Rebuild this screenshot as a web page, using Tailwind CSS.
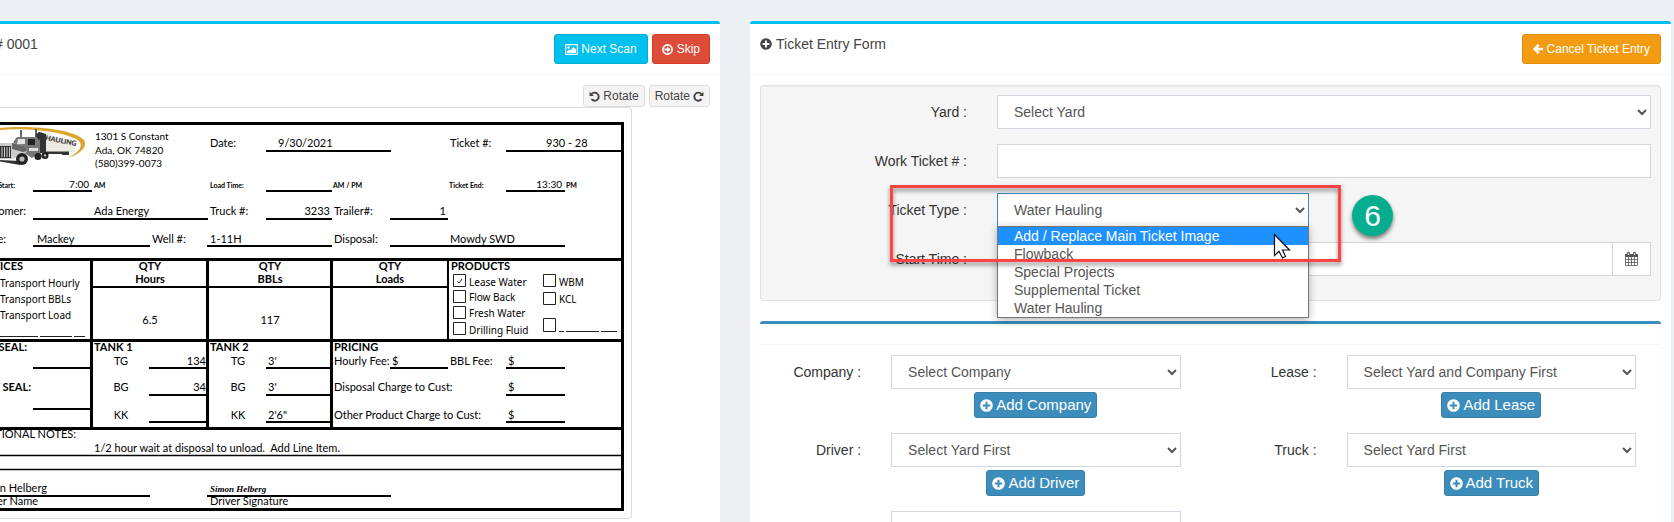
<!DOCTYPE html>
<html lang="en">
  <head>
    <meta charset="UTF-8" />
    <meta name="viewport" content="width=device-width, initial-scale=1.0" />
    <script src="https://cdn.jsdelivr.net/npm/@tailwindcss/browser@4"></script>
    <title>Ticket Entry</title>
  </head>
  <body class="bg-[#ecf0f5] font-['Liberation_Sans',Arial,sans-serif] text-sm text-[#333] overflow-hidden">
    <!-- shared icons -->
    <svg class="hidden" aria-hidden="true">
      <symbol id="plus-circle" viewBox="0 0 14 14">
        <path fill="currentColor" fill-rule="evenodd" d="M7 .2a6.800 6.800 0 1 0 0 13.600A6.800 6.800 0 0 0 7 .2ZM5.900 3h2.200v2.900H11v2.200H8.100V11H5.900V8.100H3V5.900h2.900Z"/>
      </symbol>
      <symbol id="rotate" viewBox="0 0 12 12">
        <path d="M2.600 3.600A4.400 4.400 0 1 1 2.700 8.900" fill="none" stroke="currentColor" stroke-width="2.100"/>
        <path d="M.6.8v4.700h4.700Z" fill="currentColor"/>
      </symbol>
    </svg>

    <main class="grid grid-cols-[43fr_55fr] gap-[30px] pt-[21px] pr-[3px]">
      <!-- Scanned ticket -->
      <section class="min-w-0 bg-white border-t-[3px] border-[#00c0ef] rounded-tr-[3px] shadow-[0_1px_1px_rgba(0,0,0,0.1)]">
        <div class="flex justify-between items-start py-[10px] pr-[10px] border-b border-[#f4f4f4]">
          <h3 class="-ml-[5px] leading-5 text-[#444]"># 0001</h3>
          <div class="flex gap-1 text-xs text-white">
            <button class="flex items-center gap-[3px] h-[30px] px-[10px] rounded-[3px] border border-[#00acd6] bg-[#00c0ef]">
              <svg class="w-[13px] h-[11px]" viewBox="0 0 13 11" fill="currentColor">
                <path fill-rule="evenodd" d="M0 0h13v11H0ZM1.200 1.200v8.600h10.600V1.200Z"/>
                <circle cx="3.600" cy="3.500" r="1.300"/>
                <path d="M2 9V7.500L4 5.500l1 1L8.500 3 11 5.500V9Z"/>
              </svg>
              Next Scan
            </button>
            <button class="flex items-center gap-1 h-[30px] px-[9px] rounded-[3px] border border-[#d73925] bg-[#dd4b39]">
              <svg class="w-[11px] h-[11px]" viewBox="0 0 11 11" fill="currentColor">
                <circle cx="5.500" cy="5.500" r="4.600" fill="none" stroke="currentColor" stroke-width="1.700"/>
                <path d="M5.100 2.300 8.600 5.500 5.100 8.700V6.600H2.400V4.400h2.700Z"/>
              </svg>
              Skip
            </button>
          </div>
        </div>

        <div class="pt-[10px] pr-[10px] pb-8">
          <div class="flex justify-end gap-1 text-xs text-[#444]">
            <button class="flex items-center gap-[3px] h-[22px] px-[5px] rounded-[3px] border border-[#ddd] bg-[#f4f4f4]">
              <svg class="w-[11px] h-[11px]"><use href="#rotate"/></svg>
              Rotate
            </button>
            <button class="flex items-center gap-[3px] h-[22px] px-[5px] rounded-[3px] border border-[#ddd] bg-[#f4f4f4]">
              Rotate
              <svg class="w-[11px] h-[11px] -scale-x-100"><use href="#rotate"/></svg>
            </button>
          </div>

          <div class="w-[632px] max-w-full border-y border-r border-[#ddd] rounded-r-[4px]">
            <svg class="block w-full h-auto font-[Lato,'Open_Sans',sans-serif]" viewBox="0 108 631 410" font-size="11" fill="#000" role="img" aria-label="Scanned work ticket">
              <!-- logo -->
              <path d="M0 128C30 125 74 129 84 140c4 7-4 14-16 18 9-5 15-10 12-16C72 133 30 127 0 130Z" fill="#d9a62e"/>
              <path d="M43 133 75 142v10L44 154Z" fill="#eceae2"/>
              <path d="M36 134 40 132 46 134V152L38 154Z" fill="#333"/>
              <path d="M44 151.500h25v3.500h-7v-1H45Z" fill="#333"/>
              <text x="45" y="140" font-size="7" font-weight="900" fill="#333" transform="rotate(11 45 140)">HAULING</text>
              <path d="M14 141 17 137h18l5 2v14l-8 5-9-6-11-4Z" fill="#777"/>
              <path d="M18 139h7v5h-8Z" fill="#e4e4e4"/>
              <path d="M28 139h7v6h-7Z" fill="#222"/>
              <path d="M29 148h9v3h-9Z" fill="#ddd"/>
              <path d="M21 130v7M36 129v8M39 132v8" stroke="#333" stroke-width="1.500"/>
              <path d="M0 143h12l10 2 5 6-3 4-12 4H0Z" fill="#ccc"/>
              <path d="M12 143 24 146l3 5-4 1-11-3Z" fill="#666"/>
              <path d="M0 146h11v12H0Z" fill="#333"/>
              <path d="M2 147v10M4.500 147v10M7 147v10M9.500 147v10" stroke="#ddd" stroke-width=".9"/>
              <path d="M0 160 20 161v4L0 161.500Z" fill="#333"/>
              <circle cx="22" cy="159" r="6" fill="#222"/>
              <circle cx="22" cy="159" r="2.600" fill="#bbb"/>
              <circle cx="38" cy="156.500" r="3.500" fill="#222"/>
              <circle cx="45" cy="155.500" r="3.500" fill="#222"/>
              <circle cx="45" cy="155.500" r="1.200" fill="#bbb"/>

              <!-- frame and section rules -->
              <g fill="none" stroke="#000" stroke-width="3">
                <path d="M0 123.500H622.500V509.500H0M0 259.500H623M0 340.500H623M0 428.500H623"/>
                <path d="M91.500 260V428M207.500 260V428M331.500 260V428"/>
              </g>
              <path d="M91 287H448M448 260V340" stroke="#000" stroke-width="2"/>
              <path d="M0 455.500H623M0 469.500H623" stroke="#000" stroke-width="1.500"/>

              <!-- fill-in lines -->
              <g stroke="#000" stroke-width="2">
                <path d="M266 151H391M506 151H622M33 191H92M266 191H332M506 191H565"/>
                <path d="M33 219H208M266 219H332M390 219H448M33 246H150M207 246H332M390 246H565"/>
                <path d="M33 368H91M149 368H207M266 368H331M390 368H448M506 368H565"/>
                <path d="M149 395H207M266 395H331M506 395H565M33 409H91"/>
                <path d="M149 422H207M266 422H331M506 422H565M0 496H150M207 496H391"/>
              </g>
              <path d="M0 336.500H38M40 336.500H72M74 336.500H85M559 331.500H564M566 331.500H599M601 331.500H617" stroke="#222"/>

              <g font-size="10">
                <text x="95" y="140">1301 S Constant</text>
                <text x="95" y="154">Ada, OK 74820</text>
                <text x="95" y="167">(580)399-0073</text>
              </g>
              <text x="210" y="147">Date:</text>
              <text x="278" y="147">9/30/2021</text>
              <text x="450" y="147">Ticket #:</text>
              <text x="546" y="147">930 - 28</text>

              <g font-size="7" font-weight="700">
                <text x="15" y="188" text-anchor="end">Start:</text>
                <text x="94" y="188">AM</text>
                <text x="210" y="188">Load Time:</text>
                <text x="333" y="188">AM / PM</text>
                <text x="449" y="188">Ticket End:</text>
                <text x="566" y="188">PM</text>
              </g>
              <text x="89" y="188" font-size="10" text-anchor="end">7:00</text>
              <text x="562" y="188" font-size="10" text-anchor="end">13:30</text>

              <text x="26" y="215" text-anchor="end">Customer:</text>
              <text x="94" y="215">Ada Energy</text>
              <text x="210" y="215">Truck #:</text>
              <text x="330" y="215" text-anchor="end">3233</text>
              <text x="334" y="215">Trailer#:</text>
              <text x="446" y="215" text-anchor="end">1</text>
              <text x="6" y="243" text-anchor="end">Lease:</text>
              <text x="37" y="243">Mackey</text>
              <text x="152" y="243">Well #:</text>
              <text x="210" y="243">1-11H</text>
              <text x="334" y="243">Disposal:</text>
              <text x="450" y="243">Mowdy SWD</text>

              <g font-weight="700">
                <text x="23" y="270" text-anchor="end">SERVICES</text>
                <text x="150" y="270" text-anchor="middle">QTY</text>
                <text x="270" y="270" text-anchor="middle">QTY</text>
                <text x="390" y="270" text-anchor="middle">QTY</text>
                <text x="451" y="270">PRODUCTS</text>
                <text x="150" y="283" text-anchor="middle">Hours</text>
                <text x="270" y="283" text-anchor="middle">BBLs</text>
                <text x="390" y="283" text-anchor="middle">Loads</text>
                <text x="27" y="351" text-anchor="end">SEAL:</text>
                <text x="31" y="391" text-anchor="end">EMPTY SEAL:</text>
                <text x="94" y="351">TANK 1</text>
                <text x="210" y="351">TANK 2</text>
                <text x="334" y="351">PRICING</text>
              </g>
              <text x="150" y="324" text-anchor="middle">6.5</text>
              <text x="270" y="324" text-anchor="middle">117</text>

              <g font-family="'Noto Sans', sans-serif" font-size="10">
                <text x="0" y="287">Transport Hourly</text>
                <text x="0" y="303">Transport BBLs</text>
                <text x="0" y="319">Transport Load</text>
                <text x="469" y="286">Lease Water</text>
                <text x="469" y="301">Flow Back</text>
                <text x="469" y="317">Fresh Water</text>
                <text x="469" y="334">Drilling Fluid</text>
                <text x="559" y="286">WBM</text>
                <text x="559" y="303">KCL</text>
              </g>
              <g fill="none" stroke="#222">
                <path d="M453.500 274.500h12v12h-12ZM453.500 290.500h12v12h-12ZM453.500 306.500h12v12h-12ZM453.500 322.500h12v12h-12Z"/>
                <path d="M543.500 274.500h12v12h-12ZM543.500 292.500h12v12h-12ZM543.500 318.500h12v13h-12Z"/>
                <path d="M457.500 281.500 459 283 462 279"/>
              </g>

              <g text-anchor="middle">
                <text x="121" y="365">TG</text>
                <text x="121" y="391">BG</text>
                <text x="121" y="419">KK</text>
                <text x="238" y="365">TG</text>
                <text x="238" y="391">BG</text>
                <text x="238" y="419">KK</text>
              </g>
              <text x="206" y="365" text-anchor="end">134</text>
              <text x="206" y="391" text-anchor="end">34</text>
              <text x="268" y="365">3'</text>
              <text x="268" y="391">3'</text>
              <text x="268" y="419">2'6"</text>
              <text x="334" y="365">Hourly Fee:</text>
              <text x="392" y="365">$</text>
              <text x="450" y="365">BBL Fee:</text>
              <text x="508" y="365">$</text>
              <text x="334" y="391">Disposal Charge to Cust:</text>
              <text x="508" y="391">$</text>
              <text x="334" y="419">Other Product Charge to Cust:</text>
              <text x="508" y="419">$</text>

              <text x="76" y="438" text-anchor="end">ADDITIONAL NOTES:</text>
              <text x="94" y="452" xml:space="preserve">1/2 hour wait at disposal to unload.  Add Line Item.</text>
              <text x="47" y="492" text-anchor="end">Simon Helberg</text>
              <text x="38" y="505" text-anchor="end">Driver Name</text>
              <text x="210" y="492" font-family="'Brush Script MT', 'Liberation Serif', cursive" font-size="9" font-style="italic" font-weight="700">Simon Helberg</text>
              <text x="210" y="505">Driver Signature</text>
            </svg>
          </div>
        </div>
      </section>

      <!-- Ticket entry form -->
      <section class="min-w-0 bg-white border-t-[3px] border-[#00c0ef] rounded-t-[3px] shadow-[0_1px_1px_rgba(0,0,0,0.1)]">
        <div class="flex justify-between items-start p-[10px] border-b border-[#f4f4f4]">
          <h3 class="flex items-center gap-1 leading-5 text-[#444]">
            <svg class="w-3 h-3"><use href="#plus-circle"/></svg>
            Ticket Entry Form
          </h3>
          <button class="flex items-center gap-1 h-[30px] px-[10px] rounded-[3px] border border-[#e08e0b] bg-[#f39c12] text-xs text-white">
            <svg class="w-[10px] h-[10px]" viewBox="0 0 10 10" fill="none" stroke="currentColor" stroke-width="2.600">
              <path d="M5.700.8 1.700 5l4 4.200M2 5H10"/>
            </svg>
            Cancel Ticket Entry
          </button>
        </div>

        <form class="p-[10px]">
          <div class="flex flex-col gap-[15px] px-[9px] pt-[9px] pb-6 rounded-[3px] border border-[#e3e3e3] bg-[#f5f5f5] shadow-[inset_0_1px_1px_rgba(0,0,0,0.05)]">
            <div class="grid grid-cols-[197fr_654fr] gap-[30px] items-center">
              <label for="yard" class="text-right">Yard :</label>
              <select id="yard" class="w-full h-[34px] px-3 border border-[#d2d6de] bg-white text-[#555]">
                <option>Select Yard</option>
              </select>
            </div>
            <div class="grid grid-cols-[197fr_654fr] gap-[30px] items-center">
              <label for="work-ticket" class="text-right">Work Ticket # :</label>
              <input id="work-ticket" type="text" class="w-full h-[34px] px-3 border border-[#d2d6de] bg-white text-[#555]" />
            </div>
            <div class="grid grid-cols-[197fr_654fr] gap-[30px] items-center">
              <label for="ticket-type" class="text-right">Ticket Type :</label>
              <div class="grid grid-cols-2 gap-[30px]">
                <div class="relative z-10">
                  <select id="ticket-type" class="block w-full h-[34px] px-3 border border-[#3c8dbc] bg-white text-[#555]">
                    <option>Water Hauling</option>
                  </select>
                  <ul class="absolute top-[33px] inset-x-0 border border-[#767676] bg-white text-[#555] leading-[18px] shadow-[0_2px_8px_rgba(0,0,0,0.3)]">
                    <li class="px-4 bg-[#1e90ff] text-white">Add / Replace Main Ticket Image</li>
                    <li class="px-4">Flowback</li>
                    <li class="px-4">Special Projects</li>
                    <li class="px-4">Supplemental Ticket</li>
                    <li class="px-4">Water Hauling</li>
                  </ul>
                  <!-- step callout -->
                  <div class="absolute -top-2 -bottom-[35px] -left-[107px] -right-8 border-[3px] border-[#ff4444] drop-shadow-[0_3px_2px_rgba(0,0,0,0.45)] pointer-events-none"></div>
                  <div class="absolute top-0.5 left-full ml-[43px] flex items-center justify-center w-[41px] h-[41px] rounded-full bg-[#06ae8f] text-white text-[30px] leading-none shadow-[0_3px_4px_rgba(0,0,0,0.5)]">6</div>
                  <svg class="absolute top-10 right-[18px] w-[18px] h-[27px]" viewBox="0 0 18 27">
                    <path d="M1.500 1.500V22.500L6 18.200 9.500 25 12.500 23.500 9.500 17H16.500Z" fill="#fff" stroke="#112" stroke-width="1.200"/>
                  </svg>
                </div>
              </div>
            </div>
            <div class="grid grid-cols-[197fr_654fr] gap-[30px] items-center">
              <label for="start-time" class="text-right">Start Time :</label>
              <div class="flex">
                <input id="start-time" type="text" class="min-w-0 flex-1 h-[34px] px-3 border border-[#d2d6de] bg-white text-[#555]" />
                <button type="button" aria-label="Pick date" class="flex items-center justify-center w-[38px] h-[34px] border border-l-0 border-[#d2d6de] bg-white text-[#555]">
                  <svg class="w-[13px] h-[14px]" viewBox="0 0 13 14" fill="none" stroke="currentColor">
                    <path d="M0 2h13v3H0Z" fill="currentColor" stroke="none"/>
                    <path d="M.5 4v9.500h12V4M3.500 5v8.500M6.500 5v8.500M9.500 5v8.500M.5 7.500h12M.5 10.500h12" stroke-width=".8"/>
                    <path d="M3.500 0v3.500M9.500 0v3.500" stroke-width="2.600"/>
                    <path d="M3.500 1v2M9.500 1v2" stroke="#fff" stroke-width=".8"/>
                  </svg>
                </button>
              </div>
            </div>
          </div>

          <div class="mt-5 border-t-[3px] border-[#3c8dbc] rounded-[3px] shadow-[0_1px_1px_rgba(0,0,0,0.1)]">
            <div class="h-[21px] border-b border-[#f4f4f4]"></div>
            <div class="grid grid-cols-2 gap-x-[60px] gap-y-[15px] px-[25px] py-[10px]">
              <div class="grid grid-cols-[76fr_289fr] gap-x-[30px] gap-y-[3px] items-center">
                <label for="company" class="text-right whitespace-nowrap">Company :</label>
                <select id="company" class="w-full h-[34px] px-3 border border-[#d2d6de] bg-white text-[#555]">
                  <option>Select Company</option>
                </select>
                <button type="button" class="col-start-2 justify-self-center flex items-center gap-[3px] h-[26px] px-[5px] rounded-[3px] border border-[#367fa9] bg-[#3c8dbc] text-[15px] text-white">
                  <svg class="w-[13px] h-[13px]"><use href="#plus-circle"/></svg>
                  Add Company
                </button>
              </div>
              <div class="grid grid-cols-[76fr_289fr] gap-x-[30px] gap-y-[3px] items-center">
                <label for="lease" class="text-right whitespace-nowrap">Lease :</label>
                <select id="lease" class="w-full h-[34px] px-3 border border-[#d2d6de] bg-white text-[#555]">
                  <option>Select Yard and Company First</option>
                </select>
                <button type="button" class="col-start-2 justify-self-center flex items-center gap-[3px] h-[26px] px-[5px] rounded-[3px] border border-[#367fa9] bg-[#3c8dbc] text-[15px] text-white">
                  <svg class="w-[13px] h-[13px]"><use href="#plus-circle"/></svg>
                  Add Lease
                </button>
              </div>
              <div class="grid grid-cols-[76fr_289fr] gap-x-[30px] gap-y-[3px] items-center">
                <label for="driver" class="text-right whitespace-nowrap">Driver :</label>
                <select id="driver" class="w-full h-[34px] px-3 border border-[#d2d6de] bg-white text-[#555]">
                  <option>Select Yard First</option>
                </select>
                <button type="button" class="col-start-2 justify-self-center flex items-center gap-[3px] h-[26px] px-[5px] rounded-[3px] border border-[#367fa9] bg-[#3c8dbc] text-[15px] text-white">
                  <svg class="w-[13px] h-[13px]"><use href="#plus-circle"/></svg>
                  Add Driver
                </button>
              </div>
              <div class="grid grid-cols-[76fr_289fr] gap-x-[30px] gap-y-[3px] items-center">
                <label for="truck" class="text-right whitespace-nowrap">Truck :</label>
                <select id="truck" class="w-full h-[34px] px-3 border border-[#d2d6de] bg-white text-[#555]">
                  <option>Select Yard First</option>
                </select>
                <button type="button" class="col-start-2 justify-self-center flex items-center gap-[3px] h-[26px] px-[5px] rounded-[3px] border border-[#367fa9] bg-[#3c8dbc] text-[15px] text-white">
                  <svg class="w-[13px] h-[13px]"><use href="#plus-circle"/></svg>
                  Add Truck
                </button>
              </div>
              <div class="grid grid-cols-[76fr_289fr] gap-x-[30px] items-center">
                <input type="text" aria-label="Trailer" class="col-start-2 w-full h-[34px] px-3 border border-[#d2d6de] bg-white text-[#555]" />
              </div>
            </div>
          </div>
        </form>
      </section>
    </main>
  </body>
</html>
